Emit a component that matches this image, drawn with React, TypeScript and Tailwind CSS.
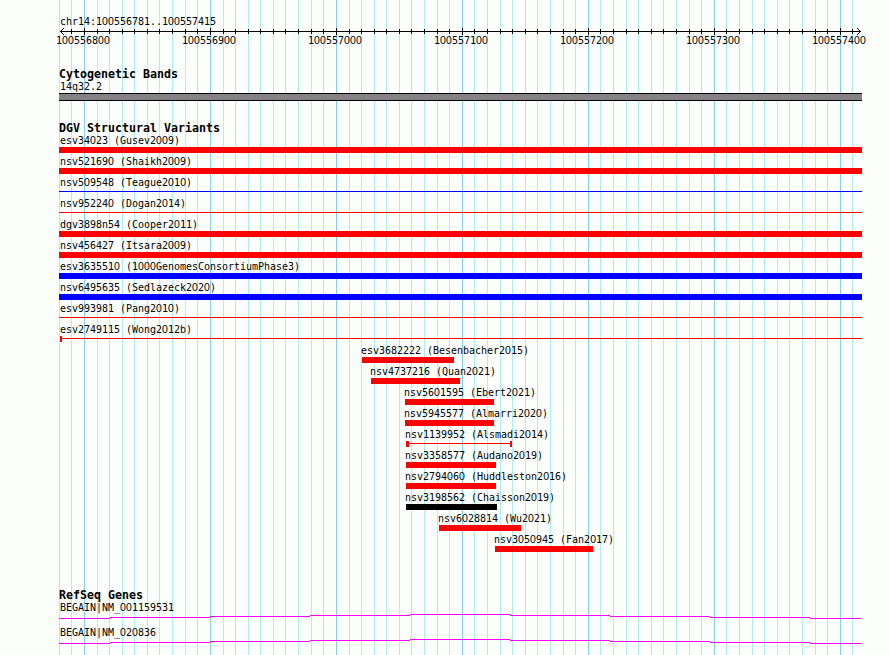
type Variant = {
  label: string;
  start: number;
  end: number;
  kind?: "bar" | "line" | "range";
  color?: string;
  capLeft?: number;
  capRight?: number;
};

const LEFT = 59;
const RIGHT = 862;

const variants: Variant[] = [
  { label: "esv34023 (Gusev2009)", start: LEFT, end: RIGHT },
  { label: "nsv521690 (Shaikh2009)", start: LEFT, end: RIGHT },
  { label: "nsv509548 (Teague2010)", start: LEFT, end: RIGHT, kind: "line", color: "bg-[#0000ff]" },
  { label: "nsv952240 (Dogan2014)", start: LEFT, end: RIGHT, kind: "line" },
  { label: "dgv3898n54 (Cooper2011)", start: LEFT, end: RIGHT },
  { label: "nsv456427 (Itsara2009)", start: LEFT, end: RIGHT },
  { label: "esv3635510 (1000GenomesConsortiumPhase3)", start: LEFT, end: RIGHT, color: "bg-[#0000ff]" },
  { label: "nsv6495635 (Sedlazeck2020)", start: LEFT, end: RIGHT, color: "bg-[#0000ff]" },
  { label: "esv993981 (Pang2010)", start: LEFT, end: RIGHT, kind: "line" },
  { label: "esv2749115 (Wong2012b)", start: 60, end: RIGHT, kind: "range", capLeft: 2, capRight: 0 },
  { label: "esv3682222 (Besenbacher2015)", start: 362, end: 454 },
  { label: "nsv4737216 (Quan2021)", start: 371, end: 460 },
  { label: "nsv5601595 (Ebert2021)", start: 405, end: 494 },
  { label: "nsv5945577 (Almarri2020)", start: 405, end: 494 },
  { label: "nsv1139952 (Alsmadi2014)", start: 406, end: 512, kind: "range", capLeft: 3, capRight: 2 },
  { label: "nsv3358577 (Audano2019)", start: 406, end: 496 },
  { label: "nsv2794060 (Huddleston2016)", start: 406, end: 496 },
  { label: "nsv3198562 (Chaisson2019)", start: 406, end: 497, color: "bg-black" },
  { label: "nsv6028814 (Wu2021)", start: 439, end: 521 },
  { label: "nsv3050945 (Fan2017)", start: 495, end: 593 },
];

// Pixel offsets of the ten 10 bp divisions inside each 100 bp block.
const divisions = [0, 13, 25, 38, 50, 63, 75, 88, 101, 113];

const ticks = Array.from({ length: 64 }, (_, i) => {
  const position = 100556780 + i * 10;
  const block = Math.floor((i - 2) / 10);
  const step = (i + 8) % 10;
  const nudge = step === 1 && block >= 3 ? 1 : 0;
  const x = i < 2 ? [59, 71][i] : 84 + block * 126 + divisions[step] - nudge;
  return { position, major: position % 100 === 0, x };
});

const intronSteps = [
  { width: 51, y: 4 },
  { width: 100, y: 3 },
  { width: 100, y: 2 },
  { width: 100, y: 1 },
  { width: 100, y: 0 },
  { width: 100, y: 1 },
  { width: 100, y: 2 },
  { width: 100, y: 3 },
  { width: 51, y: 4 },
];

function Label({ text, x = 60 }: { text: string; x?: number }) {
  return (
    <div
      className="h-[13px] whitespace-pre font-['DejaVu_Sans_Mono',monospace] text-[10px] leading-[13px] tracking-[-0.02px]"
      style={{ marginLeft: x }}
    >
      {text.split(/(0)/).map((part, i) =>
        part === "0" ? (
          <span key={i} className="inline-block h-[13px] w-[6px] text-center align-top font-['Liberation_Sans',sans-serif] text-[10.5px] leading-[13px] tracking-normal">
            0
          </span>
        ) : (
          part
        ),
      )}
    </div>
  );
}

function TrackTitle({ children }: { children: string }) {
  return (
    <h2 className="ml-[59px] h-[12px] whitespace-pre font-['DejaVu_Sans_Mono',monospace] text-[11.63px] font-bold leading-[13px]">
      {children}
    </h2>
  );
}

function Grid() {
  return (
    <div className="absolute inset-0">
      {ticks.map((t) => (
        <div
          key={t.position}
          className={`absolute inset-y-0 w-px ${t.major ? "bg-[#87ceeb]" : "bg-[#afeeee]"}`}
          style={{ left: t.x }}
        />
      ))}
    </div>
  );
}

function Ruler() {
  return (
    <div>
      <svg className="block" width="890" height="7" shapeRendering="crispEdges">
        <rect x="60" y="3" width="801" height="1" />
        {ticks.slice(1).map((t) => (
          <rect key={t.position} x={t.x} y={t.major ? 0 : 1} width="1" height={t.major ? 7 : 5} />
        ))}
        {[1, 2, 3].map((d) => (
          <g key={d}>
            <rect x={60 + d} y={3 - d} width="1" height="1" />
            <rect x={60 + d} y={3 + d} width="1" height="1" />
            <rect x={860 - d} y={3 - d} width="1" height="1" />
            <rect x={860 - d} y={3 + d} width="1" height="1" />
          </g>
        ))}
      </svg>
      <div className="-mt-px flex pl-[56px]">
        {ticks
          .filter((t) => t.major)
          .map((t) => (
            <div key={t.position} className="w-[126px] shrink-0">
              <Label text={String(t.position)} x={0} />
            </div>
          ))}
      </div>
    </div>
  );
}

function Glyph({ v }: { v: Variant }) {
  const color = v.color ?? "bg-[#ff0000]";
  const box = { marginLeft: v.start, width: v.end - v.start };
  if (v.kind === "line") {
    return (
      <div className="h-[6px] pt-[2px]" style={box}>
        <div className={`h-px ${color}`} />
      </div>
    );
  }
  if (v.kind === "range") {
    return (
      <div className="flex h-[6px]" style={box}>
        <div className={color} style={{ width: v.capLeft }} />
        <div className={`mt-[2px] h-px grow ${color}`} />
        <div className={color} style={{ width: v.capRight }} />
      </div>
    );
  }
  return <div className={`h-[6px] ${color}`} style={box} />;
}

function Gene({ name }: { name: string }) {
  return (
    <div className="h-[25px]">
      <Label text={name} />
      <div className="ml-[59px] flex">
        {intronSteps.map((s, i) => (
          <div key={i} className="h-px bg-[#ff00ff]" style={{ width: s.width, marginTop: s.y }} />
        ))}
      </div>
    </div>
  );
}

export default function App() {
  return (
    <main className="relative h-[655px] w-[890px] overflow-hidden bg-[#fcfefc] text-black">
      <Grid />
      <div className="relative flex flex-col pt-[15px]">
        <Label text="chr14:100556781..100557415" />
        <Ruler />
        <section className="mt-[21px]">
          <TrackTitle>Cytogenetic Bands</TrackTitle>
          <Label text="14q32.2" />
          <div className="ml-[59px] h-[8px] w-[803px] border-y border-black bg-[#848284]" />
        </section>
        <section className="mt-[21px]">
          <TrackTitle>DGV Structural Variants</TrackTitle>
          {variants.map((v) => (
            <div key={v.label} className="h-[21px]">
              <Label text={v.label} x={v.start <= 60 ? 60 : v.start - 1} />
              <Glyph v={v} />
            </div>
          ))}
        </section>
        <section className="mt-[35px]">
          <TrackTitle>RefSeq Genes</TrackTitle>
          <Gene name="BEGAIN|NM_001159531" />
          <Gene name="BEGAIN|NM_020836" />
        </section>
      </div>
    </main>
  );
}
